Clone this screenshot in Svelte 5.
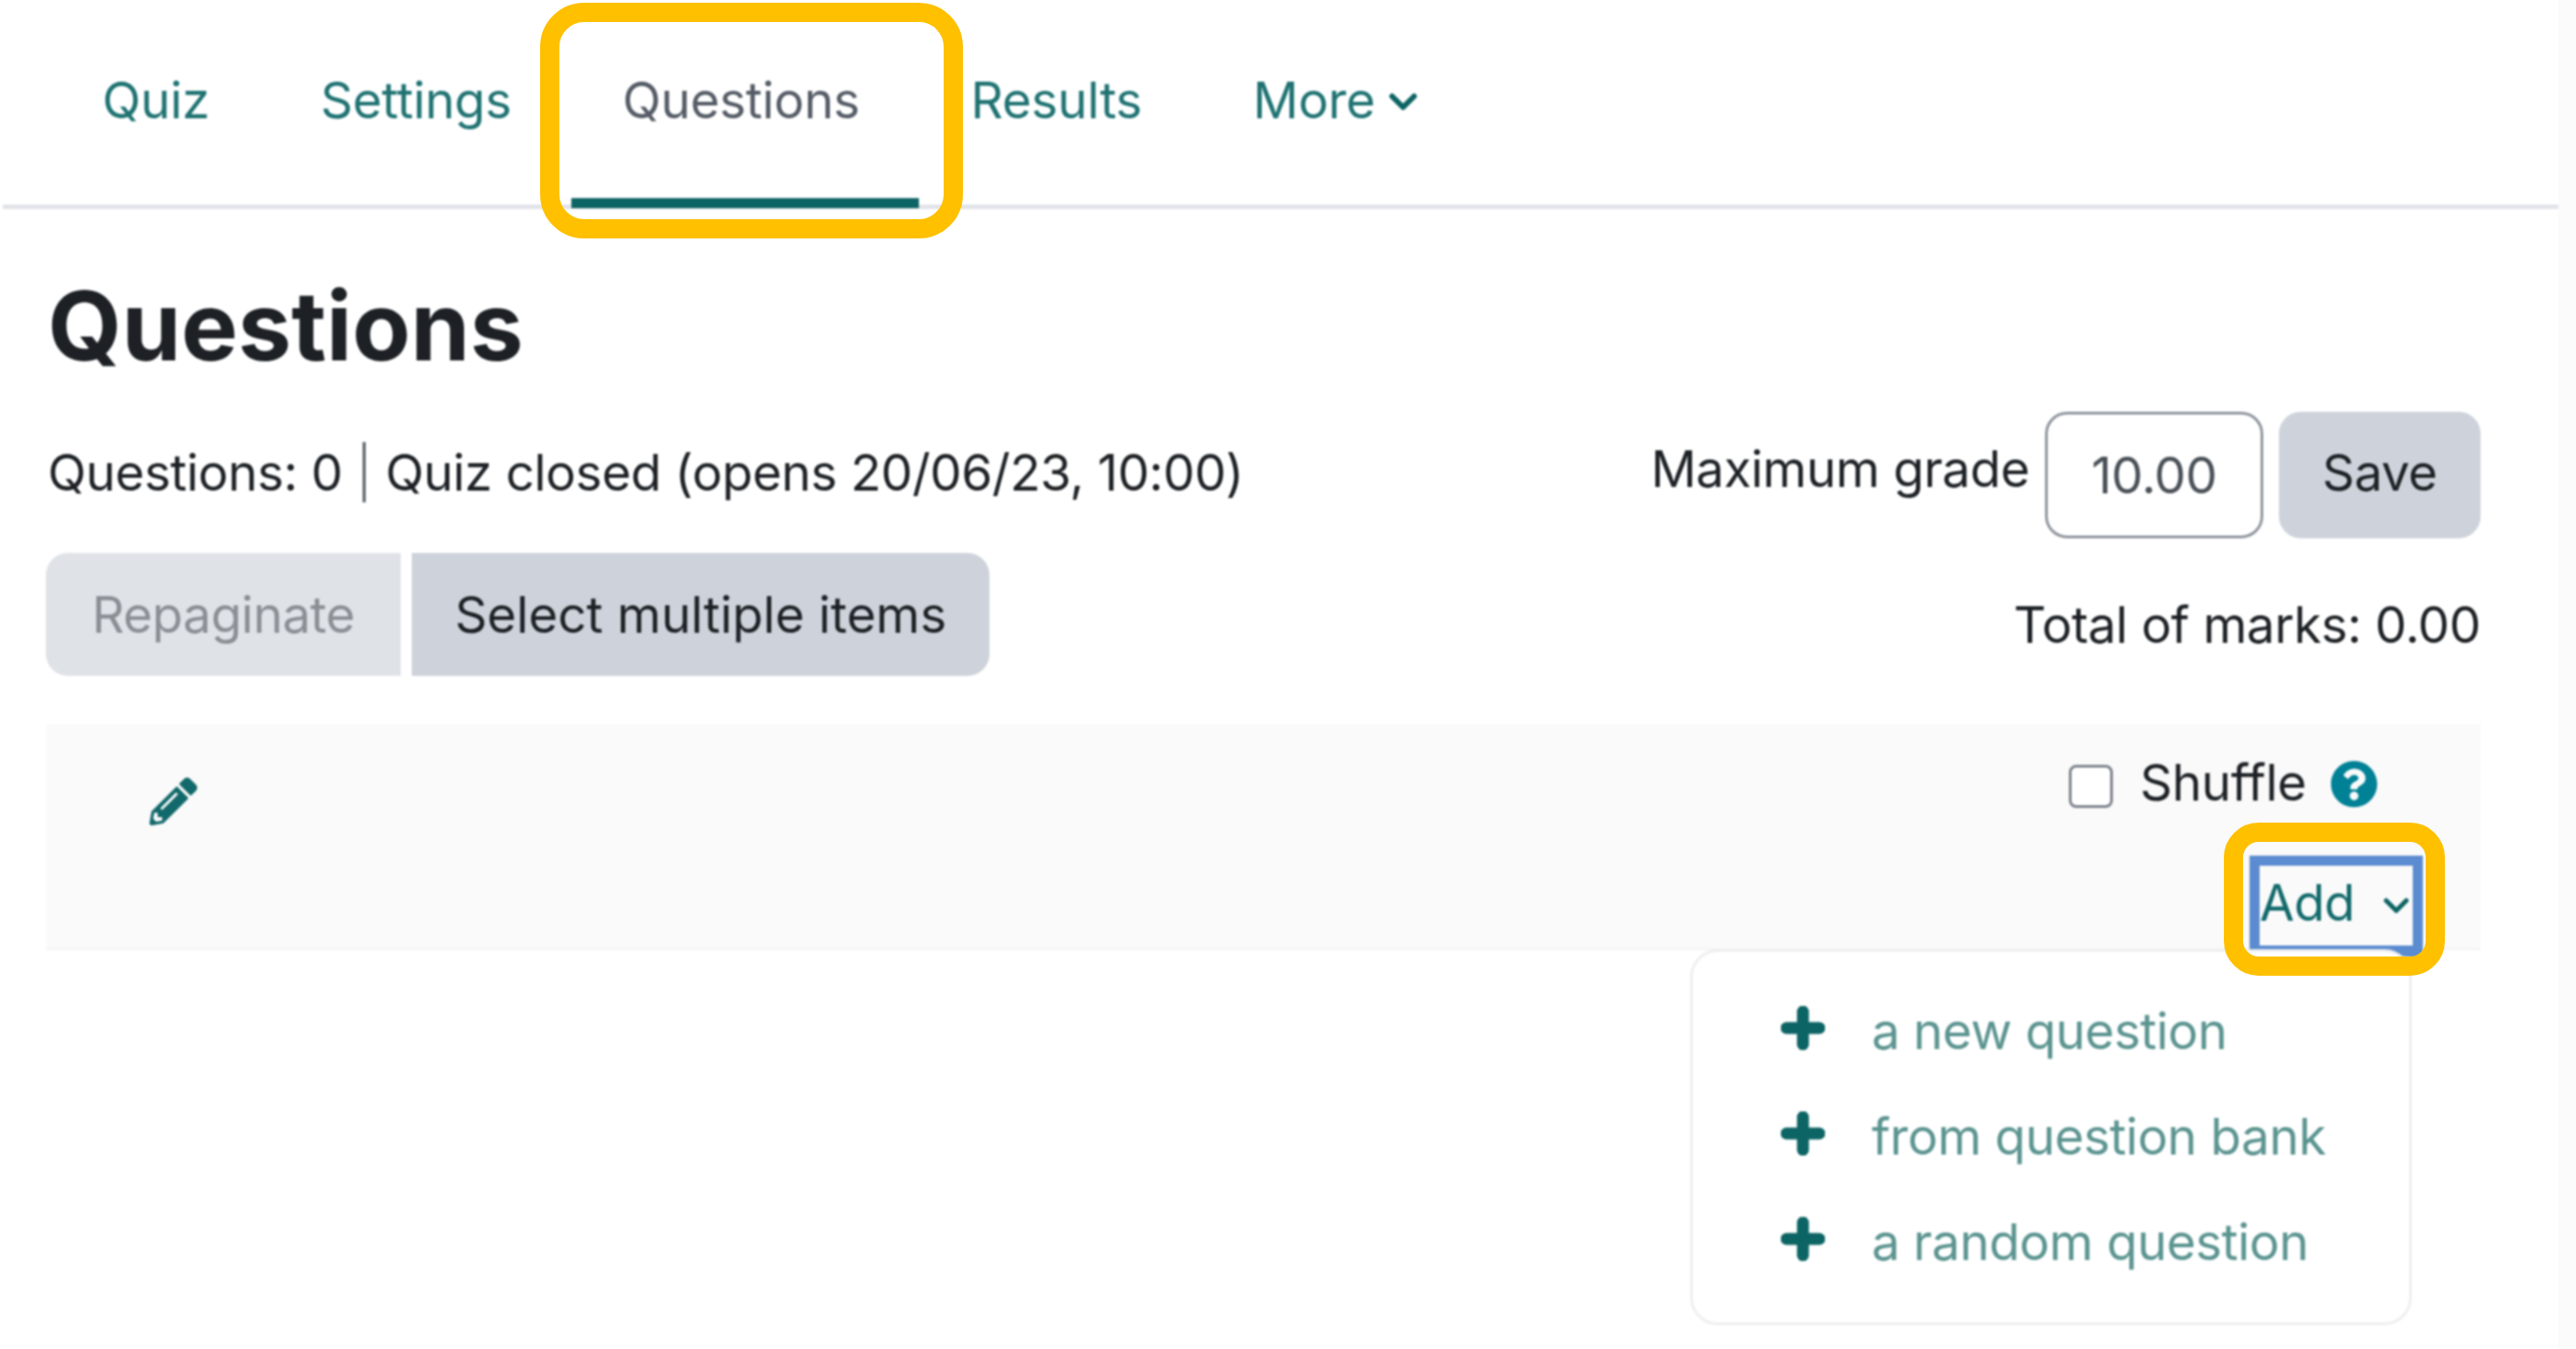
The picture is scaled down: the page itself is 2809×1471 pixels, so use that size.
<script>
  const tabs = [
    { label: 'Quiz' },
    { label: 'Settings' },
    { label: 'Questions', active: true },
    { label: 'Results' },
    { label: 'More', more: true }
  ];
  const items = ['a new question', 'from question bank', 'a random question'];
</script>

<div class="root">
  <div class="page">
    <nav class="tabs">
      {#each tabs as t}
        <span class="tab" class:active={t.active}>
          {t.label}
          {#if t.more}
            <svg class="more-chev" viewBox="0 0 32 20"><path d="M4 4l12 12L28 4" /></svg>
          {/if}
        </span>
      {/each}
    </nav>

    <h1>Questions</h1>

    <div class="head">
      <div class="left">
        <p class="status">Questions: 0 <span class="pipe">|</span> Quiz closed (opens 20/06/23, 10:00)</p>
        <div class="btns">
          <span class="btn repag">Repaginate</span>
          <span class="btn select">Select multiple items</span>
        </div>
      </div>
      <div class="right">
        <div class="grade">
          <span class="grade-label">Maximum grade</span>
          <input class="grade-input" value="10.00" />
          <span class="btn save">Save</span>
        </div>
        <p class="total">Total of marks: 0.00</p>
      </div>
    </div>

    <section class="sec">
      <svg class="pencil" viewBox="0 0 512 512"><path d="M497.9 142.1l-46.1 46.1c-4.7 4.7-12.3 4.7-17 0l-111-111c-4.7-4.7-4.7-12.3 0-17l46.1-46.1c18.7-18.7 49.1-18.7 67.9 0l60.1 60.1c18.8 18.7 18.8 49.1 0 67.9zM284.2 99.8L21.6 362.4.4 483.9c-2.9 16.4 11.4 30.6 27.8 27.8l121.5-21.3 262.6-262.6c4.7-4.7 4.7-12.3 0-17l-111-111c-4.8-4.7-12.4-4.7-17.1 0zM124.1 339.9c-5.5-5.5-5.5-14.3 0-19.8l154-154c5.5-5.5 14.3-5.5 19.8 0s5.5 14.3 0 19.8l-154 154c-5.5 5.5-14.3 5.5-19.8 0zM88 424h48v36.3l-64.5 11.3-31.1-31.1L51.7 376H88v48z" /></svg>
      <div class="sec-right">
        <div class="shuffle">
          <input type="checkbox" class="check" />
          <span class="shuffle-label">Shuffle</span>
          <svg class="help" viewBox="0 0 512 512"><path d="M504 256c0 136.997-111.043 248-248 248S8 392.997 8 256C8 119.083 119.043 8 256 8s248 111.083 248 248zM262.655 90c-54.497 0-89.255 22.957-116.549 63.758-3.536 5.286-2.353 12.415 2.715 16.258l34.699 26.31c5.205 3.947 12.621 3.008 16.665-2.122 17.864-22.658 30.113-35.797 57.303-35.797 20.429 0 45.698 13.148 45.698 32.958 0 14.976-12.363 22.667-32.534 33.976C247.128 238.528 216 254.941 216 296v4c0 6.627 5.373 12 12 12h56c6.627 0 12-5.373 12-12v-1.333c0-28.462 83.186-29.647 83.186-106.667 0-58.002-60.165-102-116.531-102zM256 338c-25.365 0-46 20.635-46 46 0 25.364 20.635 46 46 46s46-20.636 46-46c0-25.365-20.635-46-46-46z" /></svg>
        </div>
        <div class="add">
          <span class="add-label">Add</span>
          <svg class="add-chev" viewBox="0 0 28 20"><path d="M3 4l11 11L25 4" /></svg>
        </div>
      </div>
      <div class="menu">
        {#each items as item}
          <div class="menu-item">
            <svg class="plus" viewBox="0 0 48 48"><path d="M24 6v36M6 24h36" /></svg>
            <span>{item}</span>
          </div>
        {/each}
      </div>
    </section>
  </div>
  <div class="strip"></div>

  <div class="mark mark-tab"></div>
  <div class="mark mark-add"></div>
</div>

<style>
  :global(body) {
    margin: 0;
    background: #fff;
  }
  .root {
    position: relative;
    width: 2809px;
    height: 1471px;
    display: grid;
    grid-template-columns: 1fr 19px;
    overflow: hidden;
    font-family: Inter, "Liberation Sans", sans-serif;
    font-size: 55px;
    color: #1d2125;
  }
  .page {
    min-width: 0;
    filter: blur(0.8px);
  }
  .strip {
    background: #fbfbfb;
  }
  .tabs {
    display: flex;
    height: 223px;
    margin-left: 3px;
    padding-left: 48px;
    border-bottom: 5px solid #e2e4ea;
  }
  .tab {
    position: relative;
    display: flex;
    align-items: flex-start;
    padding: 71px 60.5px 0;
    line-height: 76px;
    letter-spacing: -0.3px;
    color: #1f7272;
    white-space: nowrap;
  }
  .tab.active {
    color: #555c66;
  }
  .tab.active::after {
    content: "";
    position: absolute;
    left: 5px;
    right: -4px;
    top: 216px;
    height: 11px;
    background: #0d6464;
  }
  .more-chev {
    width: 32px;
    height: 20px;
    margin: 30px 0 0 14px;
    fill: none;
    stroke: #0d6464;
    stroke-width: 6;
    stroke-linecap: round;
    stroke-linejoin: round;
  }
  h1 {
    margin: 66px 0 0 52px;
    font-size: 104px;
    font-weight: 700;
    line-height: 122px;
    color: #1d2125;
  }
  .head {
    display: flex;
    justify-content: space-between;
    margin: 32px 85px 0 50px;
  }
  .left {
    padding-top: 29px;
  }
  .status,
  .total {
    margin: 0;
    line-height: 76px;
    white-space: nowrap;
    letter-spacing: -0.5px;
  }
  .status {
    margin-left: 2px;
  }
  .pipe {
    color: #5a5f66;
    font-weight: 300;
  }
  .btns {
    display: flex;
    gap: 12px;
    margin-top: 50px;
  }
  .btn {
    display: flex;
    align-items: center;
    justify-content: center;
    box-sizing: border-box;
    line-height: 76px;
    letter-spacing: -0.5px;
    white-space: nowrap;
  }
  .repag {
    width: 387px;
    height: 134px;
    background: #dfe2e7;
    color: #8b8f95;
    border-radius: 24px 0 0 24px;
  }
  .select {
    width: 630px;
    height: 134px;
    background: #ced3db;
    border-radius: 0 24px 24px 0;
    letter-spacing: -0.1px;
  }
  .right {
    display: flex;
    flex-direction: column;
    align-items: flex-end;
  }
  .grade {
    display: flex;
    align-items: center;
    gap: 17px;
    height: 139px;
  }
  .grade-label {
    margin-bottom: 13px;
    letter-spacing: -0.5px;
    white-space: nowrap;
  }
  .grade-input {
    box-sizing: border-box;
    width: 238px;
    height: 138px;
    padding: 0;
    border: 3px solid #8f959e;
    border-radius: 24px;
    background: #fff;
    font: inherit;
    letter-spacing: -0.5px;
    color: #495057;
    text-align: center;
    outline: none;
  }
  .save {
    width: 220px;
    height: 138px;
    padding-bottom: 6px;
    background: #ced3db;
    border-radius: 24px;
  }
  .total {
    margin-top: 56px;
  }
  .sec {
    position: relative;
    display: flex;
    justify-content: space-between;
    align-items: flex-start;
    box-sizing: border-box;
    height: 246px;
    margin: 53px 85px 0 50px;
    background: #fafafa;
    border-bottom: 2px solid #f3f3f3;
  }
  .pencil {
    width: 52px;
    height: 52px;
    margin: 58px 0 0 113px;
    fill: #12696b;
  }
  .sec-right {
    display: flex;
    flex-direction: column;
    align-items: flex-end;
  }
  .shuffle {
    display: flex;
    align-items: center;
    height: 76px;
    margin: 25px 112px 0 0;
  }
  .check {
    appearance: none;
    box-sizing: border-box;
    width: 48px;
    height: 47px;
    margin: 8px 30px 0 0;
    border: 3px solid #7d838c;
    border-radius: 8px;
    background: #fff;
  }
  .shuffle-label {
    letter-spacing: -0.4px;
  }
  .help {
    width: 52px;
    height: 52px;
    margin: 4px 0 0 26px;
    fill: #008196;
  }
  .add {
    position: relative;
    display: flex;
    align-items: center;
    justify-content: space-between;
    box-sizing: border-box;
    width: 189px;
    height: 109px;
    margin: 42px 63px 0 0;
    padding: 0 4px 8px 0;
    border: 11px solid #5b8bd0;
    color: #12696b;
    letter-spacing: -0.5px;
  }
  .add::after {
    content: "";
    position: absolute;
    right: -11px;
    bottom: -13px;
    border-left: 24px solid transparent;
    border-right: 12px solid #5b8bd0;
    border-top: 3px solid #5b8bd0;
    border-bottom: 0 solid transparent;
  }
  .add-chev {
    width: 28px;
    height: 20px;
    margin-top: 8px;
    fill: none;
    stroke: #0d6464;
    stroke-width: 5;
    stroke-linecap: round;
    stroke-linejoin: round;
  }
  .menu {
    position: absolute;
    top: 245px;
    right: 75px;
    box-sizing: border-box;
    width: 787px;
    height: 410px;
    padding: 45px 0 0 96px;
    background: #fff;
    border: 3px solid #efefef;
    border-radius: 30px;
    color: #5b9490;
    letter-spacing: -0.5px;
  }
  .menu-item {
    display: flex;
    align-items: center;
    gap: 51px;
    height: 76px;
    margin-bottom: 39px;
    white-space: nowrap;
  }
  .menu-item span {
    position: relative;
    top: 3px;
    filter: blur(0.5px);
  }
  .plus {
    flex: none;
    width: 48px;
    height: 48px;
    fill: none;
    stroke: #0d6464;
    stroke-width: 13;
    stroke-linecap: round;
  }
  .mark {
    position: absolute;
    box-sizing: border-box;
    border: 21px solid #ffc000;
  }
  .mark-tab {
    left: 589px;
    top: 3px;
    width: 461px;
    height: 257px;
    border-radius: 48px;
  }
  .mark-add {
    left: 2425px;
    top: 897px;
    width: 241px;
    height: 167px;
    border-radius: 38px;
  }
</style>
